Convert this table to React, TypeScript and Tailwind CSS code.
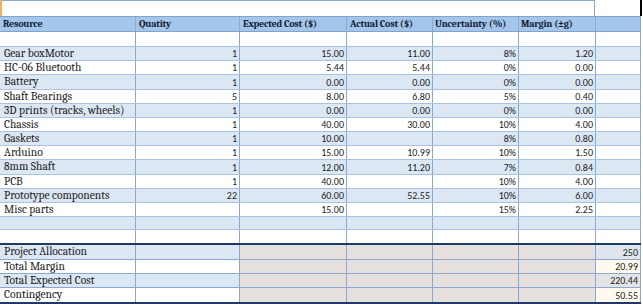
import React from 'react';

type Row = {
  name: string;
  qty?: string;
  exp?: string;
  act?: string;
  unc?: string;
  mar?: string;
  h: string;
};

const SERIF = "font-['Cambria','Liberation_Serif',serif]";
const SANS = "font-['Calibri','Liberation_Sans',sans-serif]";

const DATA: Row[] = [
  { name: 'Gear boxMotor', qty: '1', exp: '15.00', act: '11.00', unc: '8%', mar: '1.20', h: 'h-[14px]' },
  { name: 'HC-06 Bluetooth', qty: '1', exp: '5.44', act: '5.44', unc: '0%', mar: '0.00', h: 'h-[14px]' },
  { name: 'Battery', qty: '1', exp: '0.00', act: '0.00', unc: '0%', mar: '0.00', h: 'h-[15px]' },
  { name: 'Shaft Bearings', qty: '5', exp: '8.00', act: '6.80', unc: '5%', mar: '0.40', h: 'h-[14px]' },
  { name: '3D prints (tracks, wheels)', qty: '1', exp: '0.00', act: '0.00', unc: '0%', mar: '0.00', h: 'h-[14px]' },
  { name: 'Chassis', qty: '1', exp: '40.00', act: '30.00', unc: '10%', mar: '4.00', h: 'h-[14px]' },
  { name: 'Gaskets', qty: '1', exp: '10.00', unc: '8%', mar: '0.80', h: 'h-[14px]' },
  { name: 'Arduino', qty: '1', exp: '15.00', act: '10.99', unc: '10%', mar: '1.50', h: 'h-[14px]' },
  { name: '8mm Shaft', qty: '1', exp: '12.00', act: '11.20', unc: '7%', mar: '0.84', h: 'h-[15px]' },
  { name: 'PCB', qty: '1', exp: '40.00', unc: '10%', mar: '4.00', h: 'h-[14px]' },
  { name: 'Prototype components', qty: '22', exp: '60.00', act: '52.55', unc: '10%', mar: '6.00', h: 'h-[14px]' },
  { name: 'Misc parts', exp: '15.00', unc: '15%', mar: '2.25', h: 'h-[14px]' },
  { name: '', h: 'h-[13px]' },
  { name: '', h: 'h-[15px]' },
];

const FOOT = [
  { name: 'Project Allocation', val: '250', bg: 'bg-[#dfe5ee]', h: 'h-[15px]' },
  { name: 'Total Margin', val: '20.99', bg: 'bg-[#fffaf0]', h: 'h-[14px]' },
  { name: 'Total Expected Cost', val: '220.44', bg: 'bg-[#e4e4e6]', h: 'h-[14px]' },
  { name: 'Contingency', val: '50.55', bg: 'bg-[#fffaf0]', h: 'h-[16px]' },
];

const cell = 'flex h-full items-center border-r border-[#86aad4] overflow-hidden whitespace-nowrap';

function Num({ w, v }: { w: string; v?: string }) {
  return <div className={`${cell} ${w} justify-end pr-[2px] ${SANS} text-[10px] text-[#222]`}>{v}</div>;
}

export default function App() {
  return (
    <div className="w-[643px] h-[304px] bg-white overflow-hidden">
      {/* top strip */}
      <div className="flex h-[16px]">
        <div className="w-[2px] bg-[#f3b35a]" />
        <div className="w-[593px] border-t border-r border-[#86aad4]" />
        <div className="w-[45px]" />
        <div className="w-[2px] bg-black" />
      </div>

      {/* header */}
      <div className={`flex h-[16px] w-[641px] border-y border-[#7ea4cf] bg-[#a3c6ea] ${SERIF} text-[10px] font-bold tracking-[-0.2px] text-[#111a33]`}>
        <div className={`${cell} w-[136px] pl-[3px]`}>Resource</div>
        <div className={`${cell} w-[104px] pl-[3px]`}>Quatity</div>
        <div className={`${cell} w-[107px] pl-[3px]`}>Expected Cost ($)</div>
        <div className={`${cell} w-[86px] pl-[3px]`}>Actual Cost ($)</div>
        <div className={`${cell} w-[86px] pl-[2px]`}>Uncertainty (%)</div>
        <div className={`${cell} w-[77px] pl-[2px]`}>Margin (±g)</div>
        <div className={`${cell} flex-1`} />
      </div>

      {/* blank row under header */}
      <div className="flex h-[15px] w-[641px] border-b border-[#a9c2e0] bg-white">
        <div className={`${cell} w-[136px]`} />
        <div className={`${cell} w-[104px]`} />
        <div className={`${cell} w-[107px]`} />
        <div className={`${cell} w-[86px]`} />
        <div className={`${cell} w-[86px]`} />
        <div className={`${cell} w-[77px]`} />
        <div className={`${cell} flex-1`} />
      </div>

      {DATA.map((r, i) => (
        <div
          key={i}
          className={`flex w-[641px] ${r.h} border-b ${i === DATA.length - 1 ? 'border-b-2 border-[#1f3a64]' : 'border-[#a9c2e0]'} ${i % 2 === 0 ? 'bg-[#dce7f4]' : 'bg-white'}`}
        >
          <div className={`${cell} w-[136px] pl-[4px] ${SERIF} text-[11.5px] text-[#1c1c1c]`}>{r.name}</div>
          <Num w="w-[104px]" v={r.qty} />
          <Num w="w-[107px]" v={r.exp} />
          <Num w="w-[86px]" v={r.act} />
          <Num w="w-[86px]" v={r.unc} />
          <Num w="w-[77px]" v={r.mar} />
          <div className={`${cell} flex-1`} />
        </div>
      ))}

      {FOOT.map((r, i) => (
        <div
          key={r.name}
          className={`flex w-[641px] ${r.h} border-b ${i === FOOT.length - 1 ? 'border-b-2 border-[#1f3a64]' : 'border-[#8aa9cf]'} ${i % 2 === 0 ? 'bg-[#dce7f4]' : 'bg-white'}`}
        >
          <div className={`${cell} w-[136px] pl-[4px] ${SERIF} text-[11.5px] text-[#1c1c1c]`}>{r.name}</div>
          <div className={`${cell} w-[104px]`} />
          <div className={`${cell} w-[107px] bg-[#e6e0de]`} />
          <div className={`${cell} w-[86px] bg-[#e6e0de]`} />
          <div className={`${cell} w-[86px] bg-[#e6e0de]`} />
          <div className={`${cell} w-[77px] bg-[#e6e0de]`} />
          <div className={`${cell} flex-1 justify-end pr-[2px] ${r.bg} ${SANS} text-[10px] text-[#222]`}>{r.val}</div>
        </div>
      ))}
    </div>
  );
}
